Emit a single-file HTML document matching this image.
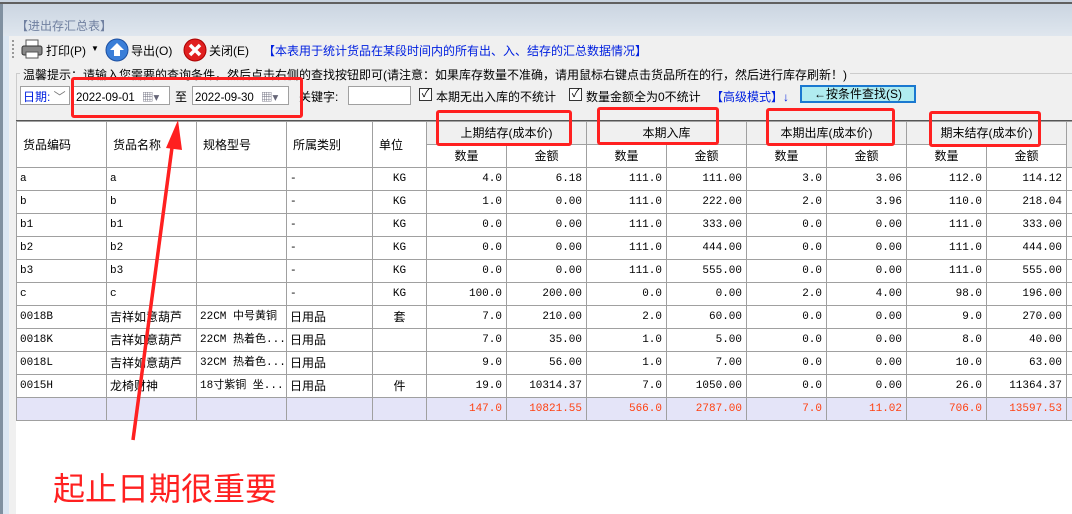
<!DOCTYPE html>
<html><head><meta charset="utf-8">
<style>
*{margin:0;padding:0;box-sizing:border-box}
body{width:1072px;height:514px;overflow:hidden;background:#fff;font-family:"Liberation Sans","Noto Sans CJK SC",sans-serif;font-size:12px;position:relative;color:#000}
.a{position:absolute;white-space:nowrap}
table{position:absolute;left:16px;top:121px;border-collapse:collapse;table-layout:fixed;width:1060px}
td{border:1px solid #a0a0a0;height:23px;line-height:16px;padding:0 3px;font-family:"Liberation Mono","Noto Sans CJK SC",monospace;font-size:11px;overflow:hidden;white-space:nowrap}
td.r{text-align:right;padding-right:4px}
td.c{text-align:center}
td.z{font-family:"Liberation Sans","Noto Sans CJK SC",sans-serif;font-size:12px}
tr.h td{font-family:"Liberation Sans","Noto Sans CJK SC",sans-serif;font-size:12px;background:#fff;line-height:14px}
tr.t td{background:#e4e4f8;color:#ff4010}
.rb{position:absolute;border:3px solid #ff2020;border-radius:3px}
</style></head><body>
<div class="a" style="left:0;top:0;width:1072px;height:36px;background:linear-gradient(#c8d3e0,#dfe6ee)"></div>
<div class="a" style="left:0;top:2px;width:1072px;height:2px;background:#606060"></div>
<div class="a" style="left:0;top:4px;width:3px;height:510px;background:#8090a0"></div>
<div class="a" style="left:3px;top:36px;width:6px;height:478px;background:#dbe6f2"></div>
<div class="a" style="left:9px;top:36px;width:1063px;height:85px;background:#f0f0f0"></div>
<div class="a" style="left:9px;top:121px;width:7px;height:393px;background:#f0f0f0"></div>
<div class="a" style="left:16px;top:17px;color:#7080a0;font-size:12px">【进出存汇总表】</div>
<div class="a" style="left:12px;top:40px;width:2px;height:18px;border-left:2px dotted #999"></div>
<svg class="a" style="left:21px;top:39px" width="22" height="20"><rect x="5" y="1" width="12" height="7" fill="#fff" stroke="#555"/><rect x="1" y="7" width="20" height="9" rx="2" fill="#888" stroke="#333"/><rect x="5" y="13" width="12" height="6" fill="#fff" stroke="#555"/></svg>
<div class="a" style="left:46px;top:42px">打印(P)</div>
<div class="a" style="left:91px;top:44px;font-size:8px">▼</div>
<svg class="a" style="left:105px;top:38px" width="24" height="24"><circle cx="12" cy="12" r="11" fill="#3a7ed8" stroke="#1c4fa0"/><path d="M12 5 L5 12 H9 V18 H15 V12 H19 Z" fill="#fff"/></svg>
<div class="a" style="left:131px;top:42px">导出(O)</div>
<svg class="a" style="left:183px;top:38px" width="24" height="24"><circle cx="12" cy="12" r="11" fill="#e02020" stroke="#a00"/><path d="M7 7 L17 17 M17 7 L7 17" stroke="#fff" stroke-width="3.5"/></svg>
<div class="a" style="left:209px;top:42px">关闭(E)</div>
<div class="a" style="left:263px;top:42px;color:#0020e0">【本表用于统计货品在某段时间内的所有出、入、结存的汇总数据情况】</div>
<div class="a" style="left:16px;top:73px;width:1056px;height:1px;background:#ccc"></div>
<div class="a" style="left:16px;top:73px;width:1px;height:48px;background:#ccc"></div>
<div class="a" style="left:20px;top:66px;background:#f0f0f0;padding:0 3px">温馨提示：请输入您需要的查询条件，然后点击右侧的查找按钮即可(请注意：如果库存数量不准确，请用鼠标右键点击货品所在的行，然后进行库存刷新！)</div>
<div class="a" style="left:20px;top:86px;width:50px;height:19px;background:#fff;border:1px solid #a0a0a0;color:#0020e0;padding:1px 2px">日期: <span style="color:#777">﹀</span></div>
<div class="a" style="left:73px;top:86px;width:97px;height:19px;background:#fff;border:1px solid #a0a0a0;padding:2px 2px;font-size:11.5px">2022-09-01 <span style="color:#667;margin-left:4px">▦▾</span></div>
<div class="a" style="left:175px;top:88px">至</div>
<div class="a" style="left:192px;top:86px;width:97px;height:19px;background:#fff;border:1px solid #a0a0a0;padding:2px 2px;font-size:11.5px">2022-09-30 <span style="color:#667;margin-left:4px">▦▾</span></div>
<div class="a" style="left:299px;top:88px">关键字:</div>
<div class="a" style="left:348px;top:86px;width:63px;height:19px;background:#fff;border:1px solid #a0a0a0"></div>
<div class="a" style="left:419px;top:88px;width:13px;height:13px;border:1px solid #333;background:#fff;font-size:11px;line-height:11px;text-align:center">✓</div>
<div class="a" style="left:436px;top:88px">本期无出入库的不统计</div>
<div class="a" style="left:569px;top:88px;width:13px;height:13px;border:1px solid #333;background:#fff;font-size:11px;line-height:11px;text-align:center">✓</div>
<div class="a" style="left:586px;top:88px">数量金额全为0不统计</div>
<div class="a" style="left:711px;top:88px;color:#0020e0">【高级模式】↓</div>
<div class="a" style="left:800px;top:85px;width:116px;height:18px;background:#b0ecf0;border:2px solid #1a78d0;text-align:center;line-height:14px">←按条件查找(S)</div>
<div class="a" style="left:16px;top:120px;width:1056px;height:1px;background:#555"></div>
<table>
<colgroup><col style="width:90px"><col style="width:90px"><col style="width:90px"><col style="width:86px"><col style="width:54px"><col style="width:80px"><col style="width:80px"><col style="width:80px"><col style="width:80px"><col style="width:80px"><col style="width:80px"><col style="width:80px"><col style="width:80px"><col style="width:10px"></colgroup>
<tr class="h"><td rowspan="2" style="padding-left:6px">货品编码</td><td rowspan="2" style="padding-left:6px">货品名称</td><td rowspan="2" style="padding-left:6px">规格型号</td><td rowspan="2" style="padding-left:6px">所属类别</td><td rowspan="2" style="padding-left:6px">单位</td><td colspan="2" class="c" style="background:#f0f0f0;height:23px">上期结存(成本价)</td><td colspan="2" class="c" style="background:#f0f0f0">本期入库</td><td colspan="2" class="c" style="background:#f0f0f0">本期出库(成本价)</td><td colspan="2" class="c" style="background:#f0f0f0">期末结存(成本价)</td><td rowspan="2" style="background:#f0f0f0"></td></tr>
<tr class="h"><td class="c" style="height:20px">数量</td><td class="c">金额</td><td class="c">数量</td><td class="c">金额</td><td class="c">数量</td><td class="c">金额</td><td class="c">数量</td><td class="c">金额</td></tr>
<tr><td>a</td><td>a</td><td></td><td>-</td><td class="c">KG</td><td class="r">4.0</td><td class="r">6.18</td><td class="r">111.0</td><td class="r">111.00</td><td class="r">3.0</td><td class="r">3.06</td><td class="r">112.0</td><td class="r">114.12</td><td></td></tr>
<tr><td>b</td><td>b</td><td></td><td>-</td><td class="c">KG</td><td class="r">1.0</td><td class="r">0.00</td><td class="r">111.0</td><td class="r">222.00</td><td class="r">2.0</td><td class="r">3.96</td><td class="r">110.0</td><td class="r">218.04</td><td></td></tr>
<tr><td>b1</td><td>b1</td><td></td><td>-</td><td class="c">KG</td><td class="r">0.0</td><td class="r">0.00</td><td class="r">111.0</td><td class="r">333.00</td><td class="r">0.0</td><td class="r">0.00</td><td class="r">111.0</td><td class="r">333.00</td><td></td></tr>
<tr><td>b2</td><td>b2</td><td></td><td>-</td><td class="c">KG</td><td class="r">0.0</td><td class="r">0.00</td><td class="r">111.0</td><td class="r">444.00</td><td class="r">0.0</td><td class="r">0.00</td><td class="r">111.0</td><td class="r">444.00</td><td></td></tr>
<tr><td>b3</td><td>b3</td><td></td><td>-</td><td class="c">KG</td><td class="r">0.0</td><td class="r">0.00</td><td class="r">111.0</td><td class="r">555.00</td><td class="r">0.0</td><td class="r">0.00</td><td class="r">111.0</td><td class="r">555.00</td><td></td></tr>
<tr><td>c</td><td>c</td><td></td><td>-</td><td class="c">KG</td><td class="r">100.0</td><td class="r">200.00</td><td class="r">0.0</td><td class="r">0.00</td><td class="r">2.0</td><td class="r">4.00</td><td class="r">98.0</td><td class="r">196.00</td><td></td></tr>
<tr><td>0018B</td><td class="z">吉祥如意葫芦</td><td>22CM 中号黄铜</td><td class="z">日用品</td><td class="c z">套</td><td class="r">7.0</td><td class="r">210.00</td><td class="r">2.0</td><td class="r">60.00</td><td class="r">0.0</td><td class="r">0.00</td><td class="r">9.0</td><td class="r">270.00</td><td></td></tr>
<tr><td>0018K</td><td class="z">吉祥如意葫芦</td><td>22CM 热着色...</td><td class="z">日用品</td><td></td><td class="r">7.0</td><td class="r">35.00</td><td class="r">1.0</td><td class="r">5.00</td><td class="r">0.0</td><td class="r">0.00</td><td class="r">8.0</td><td class="r">40.00</td><td></td></tr>
<tr><td>0018L</td><td class="z">吉祥如意葫芦</td><td>32CM 热着色...</td><td class="z">日用品</td><td></td><td class="r">9.0</td><td class="r">56.00</td><td class="r">1.0</td><td class="r">7.00</td><td class="r">0.0</td><td class="r">0.00</td><td class="r">10.0</td><td class="r">63.00</td><td></td></tr>
<tr><td>0015H</td><td class="z">龙椅财神</td><td>18寸紫铜 坐...</td><td class="z">日用品</td><td class="c z">件</td><td class="r">19.0</td><td class="r">10314.37</td><td class="r">7.0</td><td class="r">1050.00</td><td class="r">0.0</td><td class="r">0.00</td><td class="r">26.0</td><td class="r">11364.37</td><td></td></tr>
<tr class="t"><td></td><td></td><td></td><td></td><td></td><td class="r">147.0</td><td class="r">10821.55</td><td class="r">566.0</td><td class="r">2787.00</td><td class="r">7.0</td><td class="r">11.02</td><td class="r">706.0</td><td class="r">13597.53</td><td></td></tr>
</table>
<div class="rb" style="left:71px;top:77px;width:232px;height:41px"></div>
<div class="rb" style="left:436px;top:110px;width:136px;height:36px"></div>
<div class="rb" style="left:597px;top:107px;width:122px;height:38px"></div>
<div class="rb" style="left:766px;top:108px;width:129px;height:38px"></div>
<div class="rb" style="left:929px;top:111px;width:112px;height:36px"></div>
<svg class="a" style="left:0;top:0" width="1072" height="514"><path d="M133 440 L173 140" stroke="#ff2020" stroke-width="3.5"/><path d="M178 120 L166 148 L182 150 Z" fill="#ff2020"/></svg>
<div class="a" style="left:53px;top:464px;color:#ff2020;font-size:32px">起止日期很重要</div>
</body></html>
